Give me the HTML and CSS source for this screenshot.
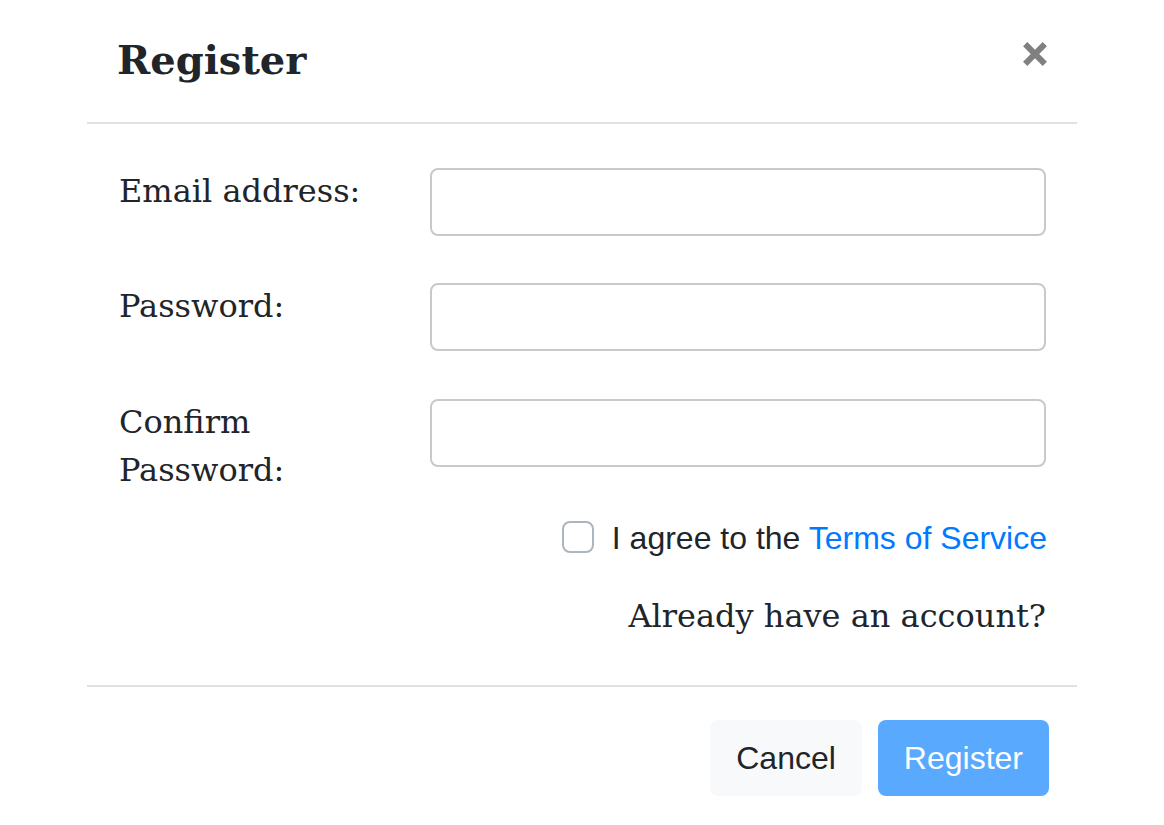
FILE: index.html
```html
<!DOCTYPE html>
<html lang="en">
<head>
<meta charset="utf-8">
<title>Register</title>
<link rel="stylesheet" href="styles.css">
</head>
<body>
<div class="modal">
  <div class="modal-header">
    <h5 class="modal-title">Register</h5>
    <button class="close" type="button" aria-label="Close">
      <svg width="24" height="24" viewBox="0 0 24 24" aria-hidden="true">
        <path d="M2.2 2.2 L21.8 21.8 M21.8 2.2 L2.2 21.8" stroke="#808080" stroke-width="6" fill="none" stroke-linecap="butt"/>
      </svg>
    </button>
  </div>
  <div class="modal-body">
    <div class="form-row row-1">
      <label class="form-label">Email address:</label>
      <input class="form-input" type="email">
    </div>
    <div class="form-row row-2">
      <label class="form-label">Password:</label>
      <input class="form-input" type="password">
    </div>
    <div class="form-row row-3">
      <label class="form-label">Confirm Password:</label>
      <input class="form-input" type="password">
    </div>
    <div class="check-row">
      <span class="checkbox"></span>
      <span class="check-label">I agree to the <a class="link" href="#">Terms of Service</a></span>
    </div>
    <div class="already">Already have an account?</div>
  </div>
  <div class="modal-footer">
    <button class="btn btn-light" type="button">Cancel</button>
    <button class="btn btn-primary" type="button">Register</button>
  </div>
</div>
</body>
</html>
```
FILE: styles.css
```css
html, body {
  margin: 0;
  padding: 0;
  background: #ffffff;
}

body {
  font-family: "DejaVu Serif", serif;
  color: #212529;
  font-size: 32px;
  line-height: 48px;
}

.modal {
  margin-left: 87px;
  width: 990px;
  background: #ffffff;
}

.modal-header {
  display: flex;
  justify-content: space-between;
  align-items: flex-start;
  padding: 30px 30px 32px 30px;
  border-bottom: 2px solid #dee2e6;
}

.modal-title {
  margin: 0;
  font-family: "DejaVu Serif", serif;
  font-weight: 700;
  font-size: 40px;
  line-height: 60px;
  color: #212529;
}

.close {
  margin: 12px 0 0 0;
  padding: 0;
  border: 0;
  background: transparent;
  width: 24px;
  height: 24px;
  display: block;
  cursor: pointer;
}

.close svg {
  display: block;
}

.modal-body {
  padding: 44px 31px 45px 32px;
}

.form-row {
  display: grid;
  grid-template-columns: 311px 616px;
  align-items: start;
}

.row-1 {
  margin-bottom: 47px;
}

.row-2 {
  margin-bottom: 48px;
}

.form-label {
  display: block;
  padding-right: 30px;
  line-height: 48px;
  margin-top: -1px;
}

.form-input {
  display: block;
  box-sizing: border-box;
  width: 616px;
  height: 68px;
  margin: 0;
  border: 2px solid #ccc8c4;
  border-radius: 8px;
  background: #ffffff;
  font-size: 32px;
}

.check-row {
  display: flex;
  justify-content: flex-end;
  align-items: center;
  margin-top: 20px;
  margin-right: -1px;
  font-family: "Liberation Sans", Arial, sans-serif;
  line-height: 48px;
}

.checkbox {
  box-sizing: border-box;
  width: 32px;
  height: 32px;
  border: 2px solid #adb5bd;
  border-radius: 8px;
  background: #ffffff;
  margin-right: 18px;
  margin-top: -2px;
}

.link {
  color: #007bff;
  text-decoration: none;
}

.already {
  margin-top: 30px;
  text-align: right;
  line-height: 48px;
}

.modal-footer {
  display: flex;
  justify-content: flex-end;
  gap: 16px;
  padding: 33px 28px 28px 32px;
  border-top: 2px solid #dee2e6;
}

.btn {
  height: 76px;
  padding: 0 26px;
  border: 0;
  border-radius: 8px;
  font-family: "Liberation Sans", Arial, sans-serif;
  font-size: 32px;
  line-height: 48px;
  cursor: pointer;
}

.btn-light {
  background: #f8f9fa;
  color: #212529;
}

.btn-primary {
  background: #59a9ff;
  color: #ffffff;
}
```
